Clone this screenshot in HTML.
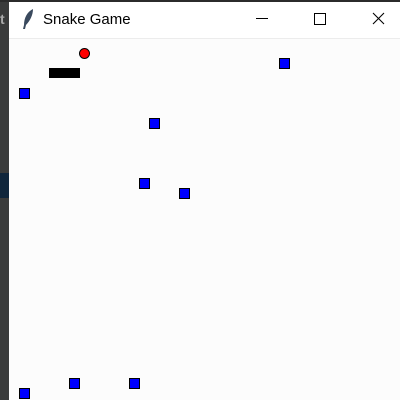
<!DOCTYPE html>
<html><head><meta charset="utf-8"><style>
html,body{margin:0;padding:0;width:400px;height:400px;overflow:hidden;background:#fcfcfc;font-family:"Liberation Sans",sans-serif}
.strip{position:absolute;left:0;top:0;width:9px;height:400px;background:#3a3b3b}
.band{position:absolute;left:0;top:173px;width:9px;height:25px;background:#10263c}
.top{position:absolute;left:0;top:0;width:400px;height:2px;background:#2b2b2b}
.title{position:absolute;left:9px;top:2px;width:391px;height:36px;background:#fff}
.sep{position:absolute;left:9px;top:38px;width:391px;height:1px;background:#ececec}
.t{position:absolute;left:43px;top:11px;font-size:15px;color:#000}
.b{position:absolute;width:9px;height:9px;background:#0000ff;border:1px solid #000}
</style></head><body>
<div class="strip"></div><div class="band"></div>
<div style="position:absolute;left:0;top:11px;color:#aaa;font-size:14px;font-weight:bold">t</div>
<div class="top"></div>
<div class="title"></div><div class="sep"></div>
<svg style="position:absolute;left:20px;top:8px" width="16" height="22" viewBox="0 0 16 22"><path d="M13 1 C7 4 4 10 4 17 L3 21 L5 21 L6 17 C10 13 13 7 13 1Z" fill="#3a4a5e"/></svg>
<div class="t">Snake Game</div>
<svg style="position:absolute;left:250px;top:8px" width="150" height="22"><path d="M6 10.5H18" stroke="#000" stroke-width="1"/><rect x="64.5" y="5.5" width="11" height="11" fill="none" stroke="#000"/><path d="M123 5L134 16M134 5L123 16" stroke="#000" stroke-width="1.1"/></svg>
<div style="position:absolute;left:49px;top:68px;width:31px;height:10px;background:#000"></div>
<div style="position:absolute;left:79px;top:48px;width:9px;height:9px;border-radius:50%;background:#f00;border:1px solid #000"></div>
<div class="b" style="left:19px;top:88px"></div>
<div class="b" style="left:279px;top:58px"></div>
<div class="b" style="left:149px;top:118px"></div>
<div class="b" style="left:139px;top:178px"></div>
<div class="b" style="left:179px;top:188px"></div>
<div class="b" style="left:69px;top:378px"></div>
<div class="b" style="left:129px;top:378px"></div>
<div class="b" style="left:19px;top:388px"></div>
</body></html>
